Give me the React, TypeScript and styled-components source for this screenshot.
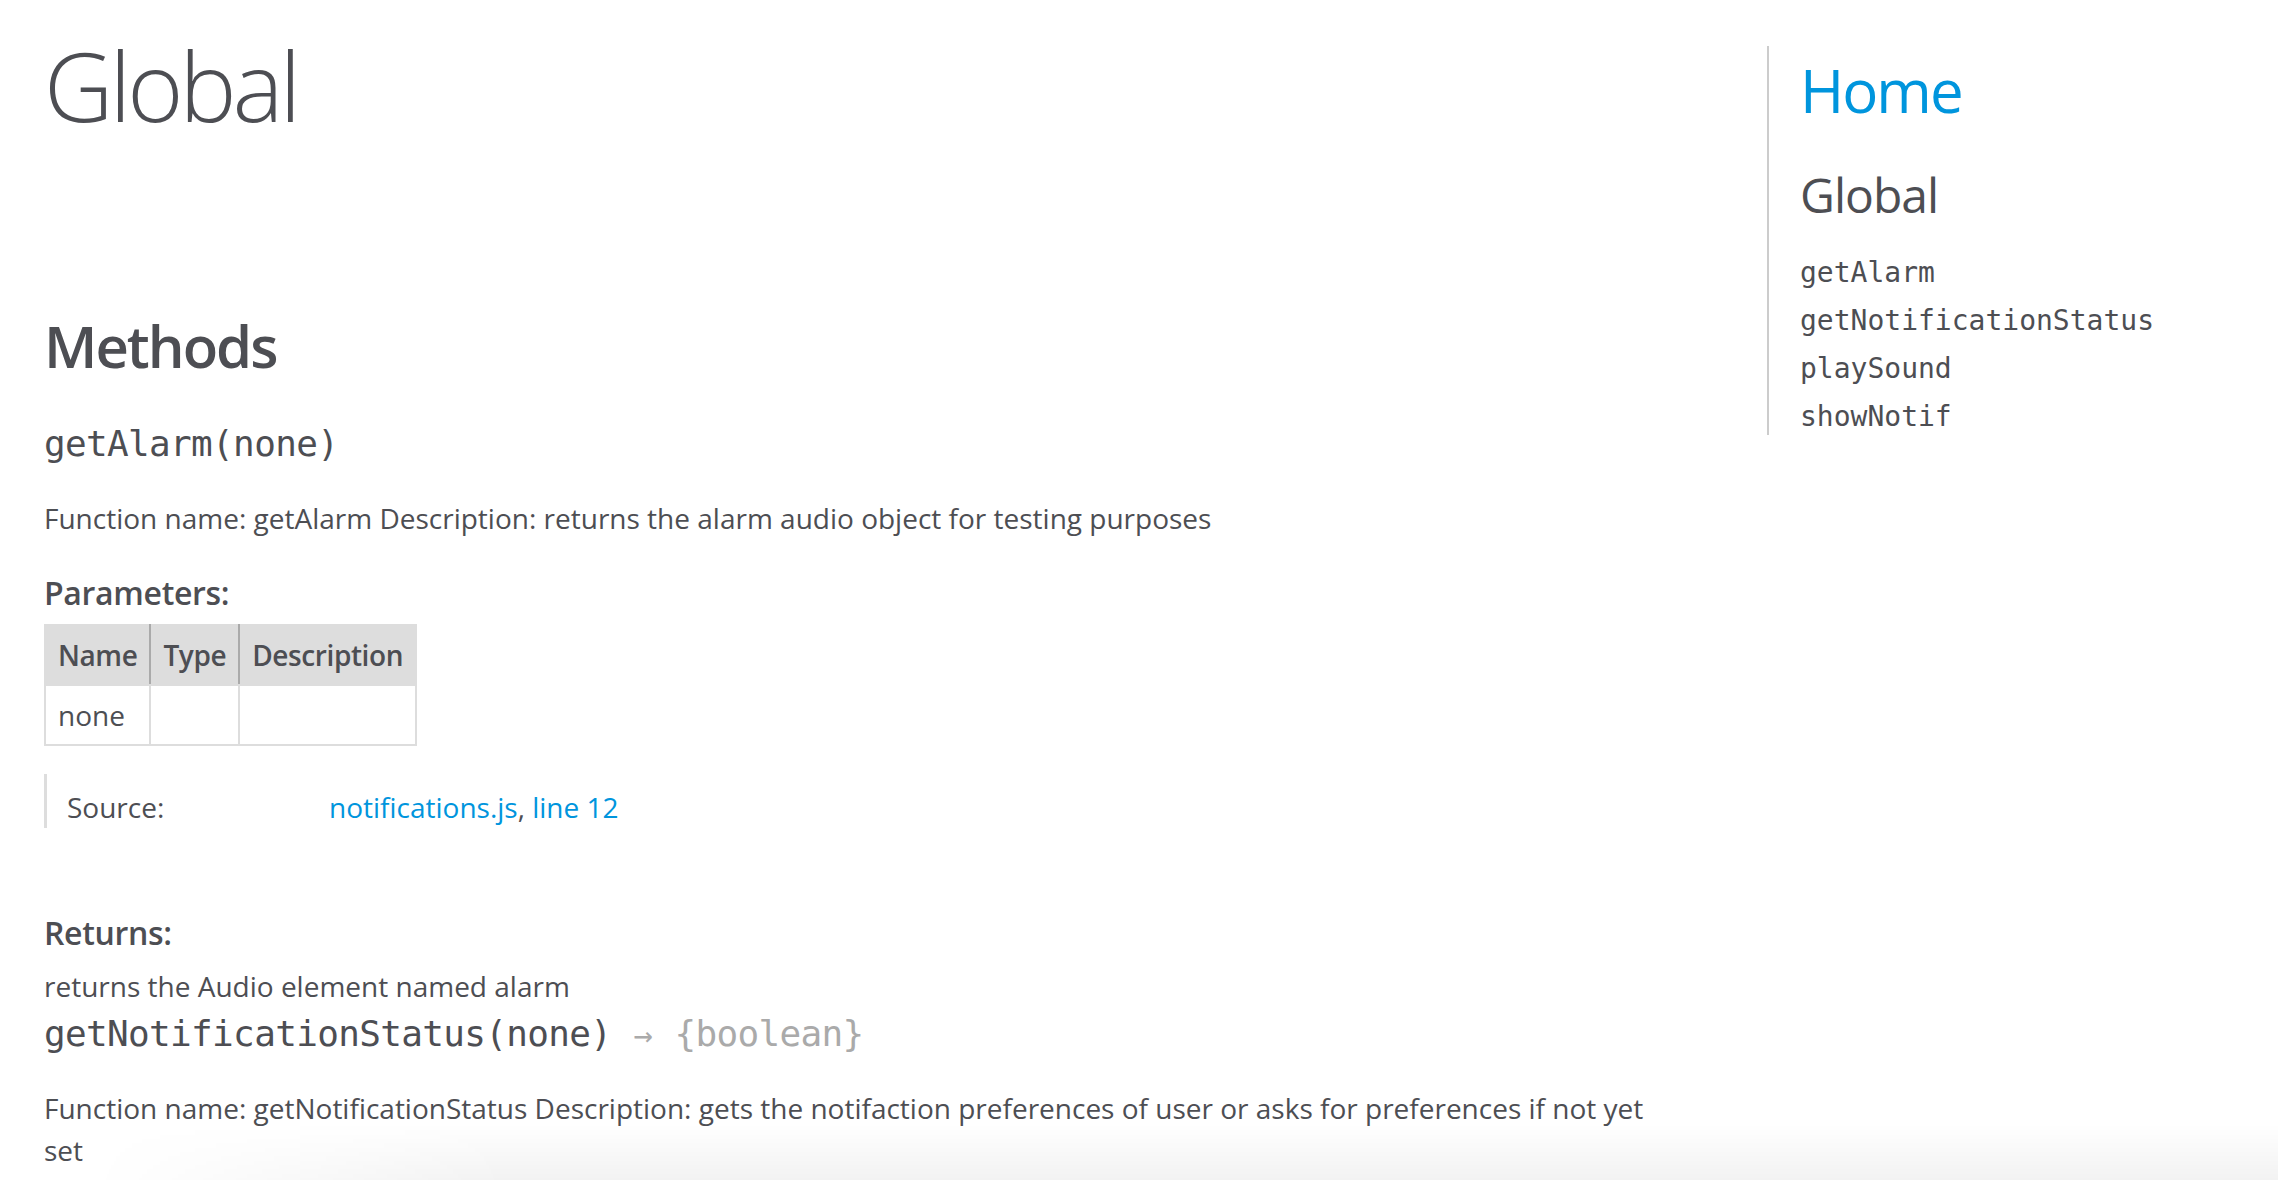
import React from 'react'
import styled, { createGlobalStyle } from 'styled-components'

const mono = `'DejaVu Sans Mono', 'Liberation Mono', monospace`

const GlobalStyle = createGlobalStyle`
  * {
    box-sizing: border-box;
  }
  html,
  body {
    margin: 0;
    padding: 0;
    background: #fff;
  }
  body {
    font-family: 'Open Sans', 'Liberation Sans', sans-serif;
    font-size: 28px;
    line-height: 1.5;
    color: #4d4e53;
  }
`

const Page = styled.div`
  display: flex;
  align-items: flex-start;
  width: 100%;
  min-height: 1180px;
  overflow: hidden;
`

const Main = styled.div`
  width: 1767px;
  flex-shrink: 0;
`

const PageTitle = styled.h1`
  margin: 13px 44px 0;
  font-size: 96px;
  font-weight: 300;
  letter-spacing: -4px;
  line-height: 144px;
`

const Section = styled.section`
  padding: 144px 44px 24px;
  margin-right: 64px;
`

const SubsectionTitle = styled.h3`
  margin: 0 0 26px;
  font-size: 58px;
  font-weight: 600;
  letter-spacing: -2px;
  line-height: 90px;
`

const MethodName = styled.h4`
  height: 54px;
  margin: 0 0 26px;
  font-family: ${mono};
  font-size: 36px;
  font-weight: 400;
  letter-spacing: -0.66px;
  line-height: 54px;
  color: #4d4e53;
`

const TypeSignature = styled.span`
  color: #aaa;
`

const Arrow = styled.span`
  display: inline-block;
  width: 21px;
  text-align: center;
  font-size: 32px;
  line-height: 1;
`

const Description = styled.p`
  margin: 0;
  line-height: 42px;
`

const BlockTitle = styled.h5<{ $top?: number }>`
  margin: ${p => p.$top ?? 0}px 0 6px;
  font-size: 32px;
  font-weight: 600;
  letter-spacing: -0.01em;
  line-height: 50.4px;
`

const Params = styled.table`
  border-collapse: collapse;
  border-spacing: 0;
  margin: 0;
`

const HeadCell = styled.th`
  background: #ddd;
  border: 2px solid #ddd;
  border-right-color: #aaa;
  padding: 8px 12px;
  text-align: left;
  vertical-align: top;
  font-weight: 600;
  letter-spacing: -0.4px;
  line-height: 42px;

  &:last-child {
    border-right-color: #ddd;
  }
`

const Cell = styled.td`
  border: 2px solid #ddd;
  padding: 8px 12px;
  text-align: left;
  vertical-align: top;
  line-height: 42px;
`

const Details = styled.dl`
  display: flex;
  margin: 28px 0 80px;
  border-left: 3px solid #ddd;
`

const DetailTerm = styled.dt`
  width: 282px;
  padding: 12px 0 0 20px;
  line-height: 42px;
`

const DetailValue = styled.dd`
  margin: 0;
  padding-top: 12px;
  line-height: 42px;
`

const Link = styled.a`
  color: #0095dd;
  text-decoration: none;
`

const Nav = styled.nav`
  flex: 1;
  margin-top: 46px;
  border-left: 2px solid #ccc;
  padding-left: 31px;
`

const NavHome = styled.h2`
  margin: 8px 0 0;
  font-size: 60px;
  font-weight: 400;
  letter-spacing: -2px;
  line-height: 72px;
`

const NavGroup = styled.h3`
  margin: 33px 0 24px;
  font-size: 48px;
  font-weight: 400;
  letter-spacing: -1px;
  line-height: 72px;
`

const NavList = styled.ul`
  margin: 0;
  padding: 0;
  list-style: none;
  font-family: ${mono};
  font-size: 28px;
  line-height: 36px;
`

const NavItem = styled.li`
  margin-top: 12px;
  color: #4d4e53;
`

const BottomShade = styled.div`
  position: fixed;
  left: 90px;
  right: 0;
  bottom: 0;
  height: 56px;
  pointer-events: none;
  background: linear-gradient(to bottom, rgba(0, 0, 0, 0), rgba(0, 0, 0, 0.05));
  -webkit-mask-image: linear-gradient(to right, transparent 0, #000 420px);
  mask-image: linear-gradient(to right, transparent 0, #000 420px);
`

const navItems = ['getAlarm', 'getNotificationStatus', 'playSound', 'showNotif']

export default function App() {
  return (
    <>
      <GlobalStyle />
      <Page>
        <Main>
          <PageTitle>Global</PageTitle>
          <Section>
            <SubsectionTitle>Methods</SubsectionTitle>

            <MethodName>getAlarm(none)</MethodName>
            <Description>
              Function name: getAlarm Description: returns the alarm audio object for testing purposes
            </Description>

            <BlockTitle $top={29}>Parameters:</BlockTitle>
            <Params>
              <thead>
                <tr>
                  <HeadCell>Name</HeadCell>
                  <HeadCell>Type</HeadCell>
                  <HeadCell>Description</HeadCell>
                </tr>
              </thead>
              <tbody>
                <tr>
                  <Cell>none</Cell>
                  <Cell />
                  <Cell />
                </tr>
              </tbody>
            </Params>

            <Details>
              <DetailTerm>Source:</DetailTerm>
              <DetailValue>
                <Link href="#">notifications.js</Link>, <Link href="#">line 12</Link>
              </DetailValue>
            </Details>

            <BlockTitle>Returns:</BlockTitle>
            <Description>returns the Audio element named alarm</Description>

            <MethodName>
              getNotificationStatus(none)
              <TypeSignature>
                {' '}
                <Arrow>→</Arrow> {'{boolean}'}
              </TypeSignature>
            </MethodName>
            <Description>
              Function name: getNotificationStatus Description: gets the notifaction preferences of user or asks
              for preferences if not yet set
            </Description>
          </Section>
        </Main>

        <Nav>
          <NavHome>
            <Link href="#">Home</Link>
          </NavHome>
          <NavGroup>Global</NavGroup>
          <NavList>
            {navItems.map(name => (
              <NavItem key={name}>{name}</NavItem>
            ))}
          </NavList>
        </Nav>
      </Page>
      <BottomShade />
    </>
  )
}
